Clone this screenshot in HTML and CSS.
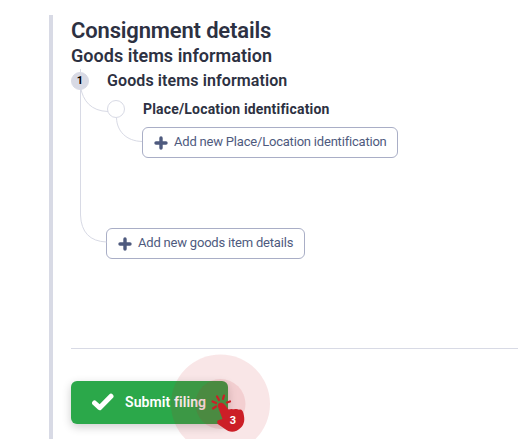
FILE: index.html
```
<!DOCTYPE html>
<html lang="en">
<head>
  <meta charset="UTF-8" />
  <meta name="viewport" content="width=device-width, initial-scale=1.0">
  <title>Consignment details</title>
  <link rel="stylesheet" href="styles.css">
</head>
<body>

  <main class="consignment">
    <h1>Consignment details</h1>
    <h2>Goods items information</h2>

    <section class="tree">
      <!-- connector lines between the nodes -->
      <svg class="tree-lines" width="72" height="190" viewBox="0 0 72 190" fill="none" stroke="#d8dae5" stroke-width="1">
        <path d="M9.500 0V146Q10.500 172 35.500 173" />
        <path d="M9.500 18C12 32 20 42 37 42.500" />
        <path d="M45.500 49C46 62 55 72 71 72.500" />
      </svg>

      <div class="row item-row">
        <span class="node filled">1</span>
        <h3>Goods items information</h3>
      </div>
      <div class="row place-row">
        <span class="node"></span>
        <h4>Place/Location identification</h4>
      </div>
      <button class="add-btn add-place">
        <svg width="14" height="14" viewBox="0 0 14 14"><path d="M7 2V12M2 7H12" stroke="#4e5a7e" stroke-width="3.400" stroke-linecap="round" /></svg>
        <span>Add new Place/Location identification</span>
      </button>
      <button class="add-btn add-goods">
        <svg width="14" height="14" viewBox="0 0 14 14"><path d="M7 2V12M2 7H12" stroke="#4e5a7e" stroke-width="3.400" stroke-linecap="round" /></svg>
        <span>Add new goods item details</span>
      </button>
    </section>

    <hr>

    <div class="actions">
      <button class="submit-btn">
        <svg width="22" height="18" viewBox="0 0 22 18"><path d="M2.600 10L7.700 14.700L19 3.200" fill="none" stroke="#fff" stroke-width="5" stroke-linecap="round" stroke-linejoin="round" /></svg>
        <span>Submit filing</span>
      </button>

      <!-- click marker for step 3 -->
      <div class="click-marker">
        <svg width="100" height="100" viewBox="0 0 100 100">
          <circle cx="49.500" cy="50" r="49.500" fill="#cc1f27" fill-opacity=".11" />
          <circle cx="49.500" cy="50" r="25" fill="#cc1f27" fill-opacity=".11" />
          <g stroke="#cc1f27" stroke-width="2.200" stroke-linecap="round">
            <path d="M48 46L46 42.500M52 45L53 41.500M56 48.500L59 47.500M45 49L41.500 47.500M45 52.500L42 54.500" />
          </g>
          <path d="M47.500 49.500C49 48 52 48.500 53.500 50.500L57.500 55.500C60 54.500 62 55 63 55.300C65 54.500 67 55 68 55.700C70.500 54.800 72 57 72.500 59.500C74 65.500 73.500 70 70 73.500C65 79 58 78.500 54 75L47.500 70.500C45.500 69 46 66 48 66L51.500 65L47 53Q46.200 51 47.500 49.500Z" fill="#cc1f27" />
        </svg>
        <span class="step">3</span>
      </div>
    </div>
  </main>

</body>
</html>
```
FILE: styles.css
```
* {
  box-sizing: border-box;
}

body {
  margin: 0;
  height: 439px;
  padding-top: 15px;
  overflow: hidden;
  background: #fff;
  font-family: Roboto, 'Liberation Sans', sans-serif;
  color: #2d3142;
}

.consignment {
  height: 424px;
  margin-left: 49px;
  padding-left: 18px;
  border-left: 4px solid #d8dae5;
}

h1, h2, h3, h4 {
  margin: 0;
  font-weight: 600;
  white-space: nowrap;
}

h1 {
  padding-top: 1px;
  font-size: 22px;
  line-height: 30px;
  letter-spacing: -0.16px;
}

h2 {
  padding-bottom: 2px;
  font-size: 18px;
  line-height: 19px;
  letter-spacing: 0.03px;
}

h3 {
  font-size: 16px;
  line-height: 20px;
  letter-spacing: 0.1px;
}

h4 {
  font-size: 14px;
  font-weight: 700;
  line-height: 18px;
  letter-spacing: 0.18px;
}

.tree {
  position: relative;
  display: flex;
  flex-direction: column;
  align-items: flex-start;
  height: 281px;
  padding-top: 4px;
}

.tree-lines {
  position: absolute;
  top: 2px;
  left: 0;
}

.row {
  position: relative;
  display: flex;
  align-items: center;
  gap: 18px;
}

.item-row {
  height: 20px;
}

.place-row {
  height: 18px;
  margin: 9px 0 0 36px;
}

.node {
  width: 18px;
  height: 18px;
  border: 1px solid #d8dae5;
  border-radius: 50%;
  background: #fff;
  color: #000;
  font-size: 11px;
  font-weight: 700;
  line-height: 16px;
  text-align: center;
}

.node.filled {
  background: #d8dae5;
}

.add-btn {
  display: flex;
  align-items: center;
  gap: 6px;
  height: 31px;
  padding: 0 11px 2px;
  border: 1px solid #a9aec6;
  border-radius: 6px;
  background: #fff;
  color: #4e5a7e;
  font-family: inherit;
  font-size: 13px;
  letter-spacing: -0.2px;
  white-space: nowrap;
}

.add-btn svg {
  flex: none;
  margin-top: 2px;
}

.add-place {
  width: 256px;
  margin: 9px 0 0 71px;
}

.add-goods {
  width: 199px;
  margin: 70px 0 0 35px;
}

hr {
  height: 1px;
  margin: 0;
  border: none;
  background: #d8dae5;
}

.actions {
  position: relative;
  padding-top: 32px;
}

.submit-btn {
  display: flex;
  align-items: center;
  gap: 11px;
  width: 157px;
  height: 43px;
  padding: 0 21px 1px;
  border: none;
  border-radius: 6px;
  background: #2ba84a;
  box-shadow: 0 3px 10px rgba(0, 0, 0, 0.2);
  color: #fff;
  font-family: inherit;
  font-size: 14px;
  font-weight: 600;
  letter-spacing: 0.1px;
  white-space: nowrap;
}

.click-marker {
  position: absolute;
  top: 5px;
  left: 100px;
  width: 100px;
  height: 100px;
}

.step {
  position: absolute;
  top: 60px;
  left: 57px;
  width: 10px;
  color: #fff;
  font-size: 11px;
  font-weight: 700;
  line-height: 14px;
  text-align: center;
}
```
